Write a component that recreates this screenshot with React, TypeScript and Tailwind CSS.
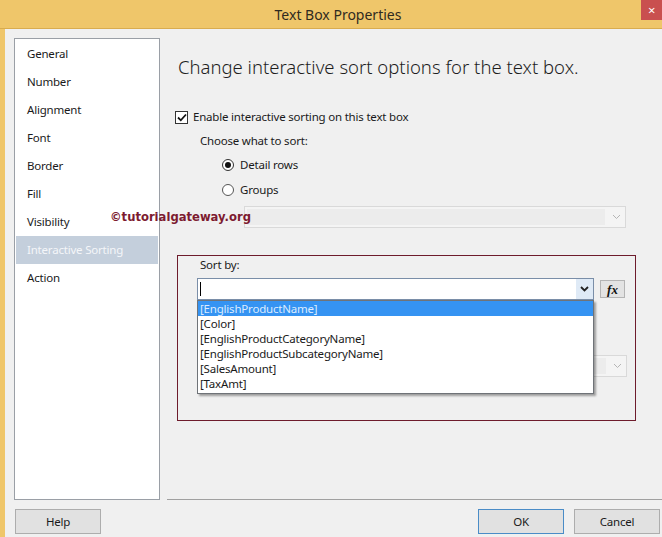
import React from "react";

const UI = { fontFamily: '"Noto Sans", "Open Sans", sans-serif' };

function Chevron({ color = "#333", light = false }: { color?: string; light?: boolean }) {
  return (
    <svg width="9" height="6" viewBox="0 0 9 6">
      <path d="M1 1 L4.5 4.5 L8 1" fill="none" stroke={color} strokeWidth={light ? 1 : 1.8} />
    </svg>
  );
}

const navItems = [
  "General",
  "Number",
  "Alignment",
  "Font",
  "Border",
  "Fill",
  "Visibility",
  "Interactive Sorting",
  "Action",
];

const fields = [
  "[EnglishProductName]",
  "[Color]",
  "[EnglishProductCategoryName]",
  "[EnglishProductSubcategoryName]",
  "[SalesAmount]",
  "[TaxAmt]",
];

function DisabledCombo({ w }: { w: string }) {
  return (
    <div className={`${w} h-[22px] border border-[#d9d9d9] bg-[#f4f4f4] flex`}>
      <div className="flex-1 bg-[#ececec] m-[2px]" />
      <div className="w-[18px] flex items-center justify-center">
        <Chevron color="#b5b5b5" light />
      </div>
    </div>
  );
}

export default function App() {
  return (
    <div
      className="relative w-[662px] h-[537px] flex flex-col bg-[#efc66a] text-[11.5px] tracking-[-0.2px] text-[#1a1a1a] overflow-hidden"
      style={UI}
    >
      {/* Title bar */}
      <div className="relative h-[29px] shrink-0 flex items-center justify-center border-b border-[#d9ac4f]">
        <span className="text-[14px] tracking-normal text-[#2f2a1f] ml-[14px]">Text Box Properties</span>
        <div className="absolute right-0 top-0 w-[21px] h-[20px] bg-[#c9504f] flex items-center justify-center text-white text-[13px] leading-none">
          ×
        </div>
      </div>

      {/* Body */}
      <div className="flex-1 ml-[5px] bg-[#f0f0f0] flex flex-col">
        <div className="flex h-[471px]">
          {/* Left nav */}
          <div className="pl-[9px] pt-[9px]">
            <div className="w-[146px] h-[462px] bg-white border border-[#9a9fa6] pt-[1px]">
              {navItems.map((item) => {
                const sel = item === "Interactive Sorting";
                return (
                  <div
                    key={item}
                    className={`h-[28px] flex items-center ${
                      sel ? "bg-[#c4cfdc] text-[#f4f6f9] mx-[1px] pl-[11px]" : "pl-[12px]"
                    }`}
                  >
                    {item}
                  </div>
                );
              })}
            </div>
          </div>

          {/* Right content */}
          <div className="flex-1 ml-[7px] border-b border-[#a0a0a0] flex flex-col">
            <div className="mt-[25px] ml-[11px] h-[26px] flex items-center text-[18.5px] tracking-normal font-light text-[#1e1e1e]">
              Change interactive sort options for the text box.
            </div>

            <div className="mt-[29px] ml-[8px] h-[16px] flex items-center gap-[5px]">
              <div className="w-[13px] h-[13px] border border-[#333] bg-white flex items-center justify-center">
                <svg width="10" height="9" viewBox="0 0 10 9">
                  <path d="M1 4.5 L3.8 7.3 L9 1.5" fill="none" stroke="#111" strokeWidth="1.8" />
                </svg>
              </div>
              <span>Enable interactive sorting on this text box</span>
            </div>

            <div className="mt-[8px] ml-[33px] h-[16px] flex items-center">Choose what to sort:</div>

            <div className="mt-[8px] ml-[55px] h-[16px] flex items-center gap-[6px]">
              <div className="w-[12px] h-[12px] rounded-full border border-[#333] bg-white flex items-center justify-center">
                <div className="w-[6px] h-[6px] rounded-full bg-[#111]" />
              </div>
              <span>Detail rows</span>
            </div>

            <div className="mt-[9px] ml-[55px] h-[16px] flex items-center gap-[6px]">
              <div className="w-[12px] h-[12px] rounded-full border border-[#555] bg-white" />
              <span>Groups</span>
            </div>

            <div className="mt-[8px] ml-[77px]">
              <DisabledCombo w="w-[382px]" />
            </div>

            {/* Red box */}
            <div className="mt-[27px] ml-[10px] w-[459px] h-[166px] border border-[#6e1c2c]">
              <div className="mt-[1px] ml-[22px] h-[16px] flex items-center">Sort by:</div>
              <div className="mt-[5px] ml-[19px] flex items-center gap-[6px]">
                <div className="relative w-[397px] h-[22px] border border-[#7a8ea8] bg-white flex">
                  <div className="flex-1 flex items-center pl-[2px]">
                    <div className="w-[1px] h-[14px] bg-black" />
                  </div>
                  <div className="w-[17px] bg-[#dfeaf6] flex items-center justify-center">
                    <Chevron color="#222" />
                  </div>
                  {/* Dropdown list */}
                  <div className="absolute left-[-1px] top-[21px] w-[397px] border border-[#6f7378] bg-white shadow-[2px_2px_2px_rgba(0,0,0,0.35)] z-10 pb-[2px]">
                    {fields.map((f, i) => (
                      <div
                        key={f}
                        className={`h-[15px] flex items-center pl-[2px] leading-none ${
                          i === 0 ? "bg-[#3593f2] text-[#dcecff]" : "text-[#1a1a1a]"
                        }`}
                      >
                        {f}
                      </div>
                    ))}
                  </div>
                </div>
                <div className="w-[25px] h-[18px] border border-[#b4b4b4] bg-[#e3e3e3] flex items-center justify-center">
                  <span
                    className="italic font-bold text-[13px] leading-none text-[#111] tracking-normal"
                    style={{ fontFamily: '"Liberation Serif", serif' }}
                  >
                    fx
                  </span>
                </div>
              </div>
              <div className="mt-[55px] ml-[19px]">
                <DisabledCombo w="w-[430px]" />
              </div>
            </div>
          </div>
        </div>

        {/* Footer */}
        <div className="flex-1 flex items-start pt-[9px]">
          <button className="ml-[10px] w-[86px] h-[25px] border border-[#adadad] bg-[#e1e1e1]">
            Help
          </button>
          <div className="flex-1" />
          <button className="w-[86px] h-[25px] border border-[#4a8cc7] bg-[#e1e1e1]">OK</button>
          <button className="ml-[10px] mr-[2px] w-[86px] h-[25px] border border-[#adadad] bg-[#e1e1e1]">
            Cancel
          </button>
        </div>
      </div>

      {/* Watermark */}
      <div
        className="absolute left-[110px] top-[209px] text-[11.6px] tracking-normal font-bold text-[#7d1b30] leading-[16px]"
        style={{ fontFamily: '"DejaVu Sans", sans-serif' }}
      >
        ©tutorialgateway.org
      </div>
    </div>
  );
}
